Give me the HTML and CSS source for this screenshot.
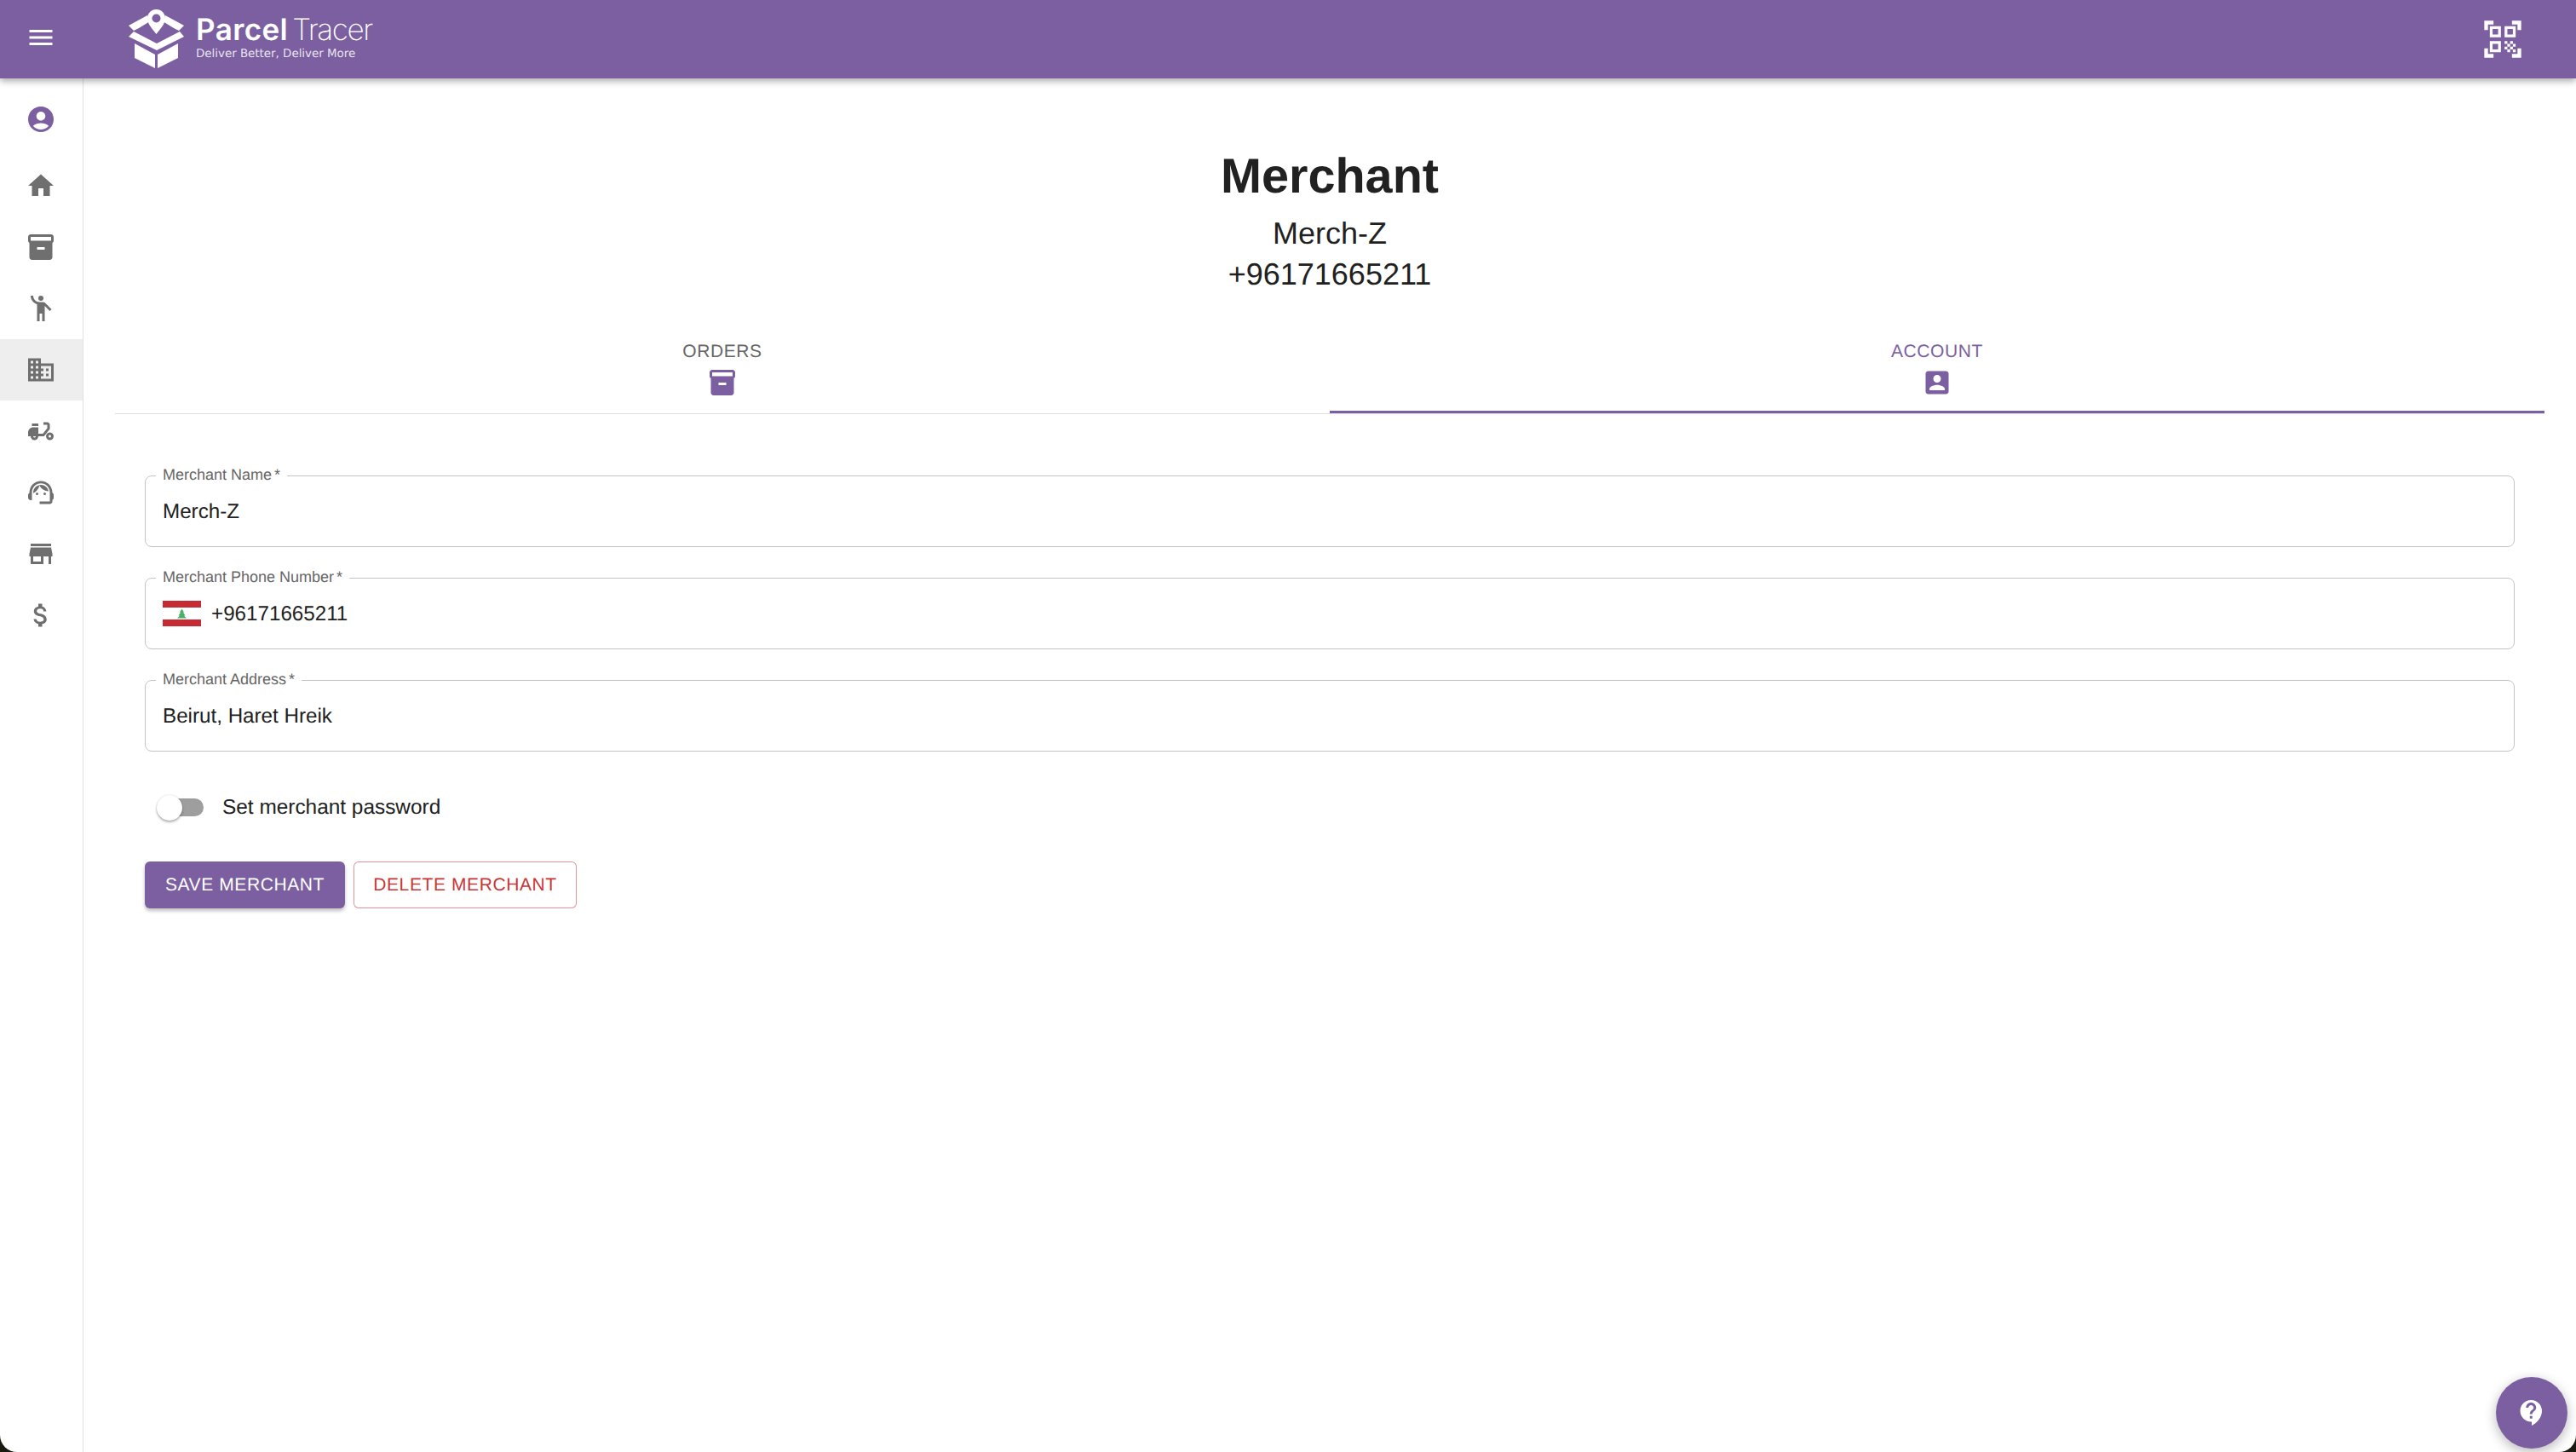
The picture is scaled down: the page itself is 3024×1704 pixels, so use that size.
FILE: index.html
```html
<!DOCTYPE html>
<html lang="en">
<head>
    <meta charset="UTF-8">
    <title>Parcel Tracer - Merchant</title>
    <link rel="stylesheet" href="styles.css">
</head>
<body>
<div class="page">
    <!-- Top bar -->
    <header class="topbar">
        <button class="icon-btn menu-btn">
            <svg class="icon" viewBox="0 0 24 24"><path d="M3 18h18v-2H3v2zm0-5h18v-2H3v2zm0-7v2h18V6H3z"/></svg>
        </button>
        <div class="logo">
            <svg class="logo-mark" viewBox="0 0 65 69">
                <path d="M32.5 0C26.7 0 22 4.7 22 10.5 22 17 28 23 32.5 29 37 23 43 17 43 10.5 43 4.7 38.300 0 32.500 0z"/>
                <circle class="logo-hole" cx="32.500" cy="10.500" r="5"/>
                <polygon points="0,19 22,7 25,14 12,22 6,25"/>
                <polygon points="65,19 43,7 40,14 53,22 59,25"/>
                <polygon points="0,32 6,26 33,40 60,26 65,32 33,48"/>
                <polygon points="7,40 31,53 31,69 7,57"/>
                <polygon points="58,40 34,53 34,69 58,57"/>
            </svg>
            <div class="logo-text">
                <div class="logo-name"><span class="logo-parcel">Parcel</span><span class="logo-tracer">Tracer</span></div>
                <div class="logo-tag">Deliver Better, Deliver More</div>
            </div>
        </div>
        <button class="icon-btn qr-btn">
            <svg class="qr-icon" viewBox="0 0 24 24"><path d="M9.500 6.500v3h-3v-3h3M11 5H5v6h6V5zm-1.500 9.500v3h-3v-3h3M11 13H5v6h6v-6zm6.500-6.500v3h-3v-3h3M19 5h-6v6h6V5zm-6 8h1.500v1.500H13V13zm1.500 1.500H16V16h-1.500v-1.500zM16 13h1.500v1.500H16V13zm-3 3h1.500v1.500H13V16zm1.500 1.500H16V19h-1.500v-1.500zM16 16h1.500v1.500H16V16zm1.500-1.500H19V16h-1.500v-1.500zm0 3H19V19h-1.500v-1.500zM22 7h-2V4h-3V2h5v5zm0 15v-5h-2v3h-3v2h5zM2 22h5v-2H4v-3H2v5zM2 2v5h2V4h3V2H2z"/></svg>
        </button>
    </header>

    <div class="content">
        <!-- Side navigation -->
        <nav class="sidebar">
            <a class="nav-item nav-account">
                <svg class="icon" viewBox="0 0 24 24"><path d="M12 2C6.480 2 2 6.480 2 12s4.480 10 10 10 10-4.480 10-10S17.520 2 12 2zm0 4c1.930 0 3.500 1.570 3.500 3.500S13.930 13 12 13s-3.500-1.570-3.500-3.500S10.070 6 12 6zm0 14c-2.030 0-4.430-.820-6.140-2.880C7.550 15.800 9.680 15 12 15s4.450.800 6.140 2.120C16.430 19.180 14.030 20 12 20z"/></svg>
            </a>
            <a class="nav-item">
                <svg class="icon" viewBox="0 0 24 24"><path d="M10 20v-6h4v6h5v-8h3L12 3 2 12h3v8z"/></svg>
            </a>
            <a class="nav-item">
                <svg class="icon" viewBox="0 0 24 24"><path d="M20 2H4c-1 0-2 .9-2 2v3.010c0 .720.430 1.340 1 1.690V20c0 1.100 1.100 2 2 2h14c.9 0 2-.9 2-2V8.700c.570-.350 1-.970 1-1.690V4c0-1.100-1-2-2-2zm-5 12H9v-2h6v2zm5-7H4V4l16-.020V7z"/></svg>
            </a>
            <a class="nav-item">
                <svg class="icon" viewBox="0 0 24 24"><circle cx="12" cy="4" r="2"/><path d="M15.890 8.110C15.500 7.720 14.830 7 13.530 7h-2.540C8.240 6.990 6 4.750 6 2H4c0 3.160 2.110 5.840 5 6.710V22h2v-6h2v6h2V10.050L18.950 14l1.410-1.410-4.470-4.480z"/></svg>
            </a>
            <a class="nav-item nav-selected">
                <svg class="icon" viewBox="0 0 24 24"><path d="M12 7V3H2v18h20V7H12zM6 19H4v-2h2v2zm0-4H4v-2h2v2zm0-4H4V9h2v2zm0-4H4V5h2v2zm4 12H8v-2h2v2zm0-4H8v-2h2v2zm0-4H8V9h2v2zm0-4H8V5h2v2zm10 12h-8v-2h2v-2h-2v-2h2v-2h-2V9h8v10zm-2-8h-2v2h2v-2zm0 4h-2v2h2v-2z"/></svg>
            </a>
            <a class="nav-item">
                <svg class="icon" viewBox="0 0 24 24"><path d="M19 7c0-1.100-.9-2-2-2h-3v2h3v2.650L13.520 14H10V9H6c-2.210 0-4 1.790-4 4v3h2c0 1.660 1.340 3 3 3s3-1.340 3-3h4.480L19 10.350V7zM7 17c-.550 0-1-.450-1-1h2c0 .550-.450 1-1 1z"/><path d="M5 6h5v2H5zM19 13c-1.660 0-3 1.340-3 3s1.340 3 3 3 3-1.340 3-3-1.340-3-3-3zm0 4c-.550 0-1-.450-1-1s.450-1 1-1 1 .450 1 1-.450 1-1 1z"/></svg>
            </a>
            <a class="nav-item">
                <svg class="icon" viewBox="0 0 24 24"><path d="M21 12.220C21 6.730 16.740 3 12 3c-4.690 0-9 3.650-9 9.280-.6.340-1 .980-1 1.720v2c0 1.100.9 2 2 2h1v-6.100c0-3.870 3.130-7 7-7s7 3.130 7 7V19h-8v2h8c1.100 0 2-.9 2-2v-1.220c.590-.310 1-.920 1-1.640v-2.300c0-.7-.410-1.310-1-1.620z"/><circle cx="9" cy="13" r="1"/><circle cx="15" cy="13" r="1"/><path d="M18 11.030C17.520 8.180 15.040 6 12.050 6c-3.030 0-6.290 2.510-6.030 6.450 2.470-1.010 4.330-3.210 4.860-5.890 1.310 2.630 4 4.440 7.120 4.470z"/></svg>
            </a>
            <a class="nav-item">
                <svg class="icon" viewBox="0 0 24 24"><path d="M20 4H4v2h16V4zm1 10v-2l-1-5H4l-1 5v2h1v6h10v-6h4v6h2v-6h1zm-9 4H6v-4h6v4z"/></svg>
            </a>
            <a class="nav-item">
                <svg class="icon" viewBox="0 0 24 24"><path d="M11.800 10.900c-2.270-.590-3-1.200-3-2.150 0-1.090 1.010-1.850 2.700-1.850 1.780 0 2.440.850 2.500 2.100h2.210c-.070-1.720-1.120-3.300-3.210-3.810V3h-3v2.160c-1.940.420-3.500 1.680-3.500 3.610 0 2.310 1.910 3.460 4.700 4.130 2.500.6 3 1.480 3 2.410 0 .690-.490 1.790-2.700 1.790-2.060 0-2.870-.920-2.980-2.100h-2.200c.120 2.190 1.760 3.420 3.680 3.830V21h3v-2.150c1.950-.370 3.500-1.500 3.500-3.550 0-2.840-2.430-3.810-4.700-4.400z"/></svg>
            </a>
        </nav>

        <main class="main">
            <h1 class="title">Merchant</h1>
            <div class="subtitle">Merch-Z</div>
            <div class="subtitle">+96171665211</div>

            <div class="tabs">
                <div class="tab">
                    <span class="tab-label">ORDERS</span>
                    <svg class="icon" viewBox="0 0 24 24"><path d="M20 2H4c-1 0-2 .9-2 2v3.010c0 .720.430 1.340 1 1.690V20c0 1.100 1.100 2 2 2h14c.9 0 2-.9 2-2V8.700c.570-.350 1-.970 1-1.690V4c0-1.100-1-2-2-2zm-5 12H9v-2h6v2zm5-7H4V4l16-.020V7z"/></svg>
                </div>
                <div class="tab tab-active">
                    <span class="tab-label">ACCOUNT</span>
                    <svg class="icon" viewBox="0 0 24 24"><path d="M3 5v14c0 1.100.890 2 2 2h14c1.100 0 2-.9 2-2V5c0-1.100-.9-2-2-2H5c-1.110 0-2 .9-2 2zm12 4c0 1.660-1.340 3-3 3s-3-1.340-3-3 1.340-3 3-3 3 1.340 3 3zm-9 8c0-2 4-3.100 6-3.100s6 1.100 6 3.100v1H6v-1z"/></svg>
                </div>
            </div>

            <form class="form">
                <div class="field">
                    <label class="field-label">Merchant Name<span class="req">*</span></label>
                    <span class="field-value">Merch-Z</span>
                </div>
                <div class="field">
                    <label class="field-label">Merchant Phone Number<span class="req">*</span></label>
                    <svg class="flag" viewBox="0 0 45 30">
                        <rect width="45" height="30" fill="#fff"/>
                        <rect width="45" height="8" fill="#c62a32"/>
                        <rect y="22" width="45" height="8" fill="#c62a32"/>
                        <polygon points="22.500,9.500 25,13.500 24,13.500 26.500,17.500 25,17.500 28,20.500 17,20.500 20,17.500 18.500,17.500 21,13.500 20,13.500" fill="#4caf6a"/>
                    </svg>
                    <span class="field-value">+96171665211</span>
                </div>
                <div class="field">
                    <label class="field-label">Merchant Address<span class="req">*</span></label>
                    <span class="field-value">Beirut, Haret Hreik</span>
                </div>

                <div class="switch-row">
                    <span class="switch"><span class="switch-thumb"></span></span>
                    <span class="switch-label">Set merchant password</span>
                </div>

                <div class="actions">
                    <button type="button" class="btn btn-save">SAVE MERCHANT</button>
                    <button type="button" class="btn btn-delete">DELETE MERCHANT</button>
                </div>
            </form>
        </main>
    </div>

    <button class="fab">
        <svg class="icon" viewBox="0 0 24 24"><path d="M11.500 2C6.810 2 3 5.810 3 10.500S6.810 19 11.500 19h.5v3c4.860-2.340 8-7 8-11.500C20 5.810 16.190 2 11.500 2zm1 14.500h-2v-2h2v2zm0-3.500h-2c0-3.250 3-3 3-5 0-1.100-.9-2-2-2s-2 .9-2 2h-2c0-2.210 1.790-4 4-4s4 1.790 4 4c0 2.500-3 2.750-3 5z"/></svg>
    </button>
</div>
</body>
</html>
```

FILE: styles.css
```css
html {
    background: #1c1a10;
}

body {
    margin: 0;
    font-family: "Liberation Sans", Arial, sans-serif;
    color: #212121;
    text-rendering: geometricPrecision;
}

.page {
    position: relative;
    width: 3024px;
    height: 1704px;
    background: #fff;
    overflow: hidden;
    border-radius: 0 0 20px 20px;
    display: flex;
    flex-direction: column;
}

.icon {
    width: 36px;
    height: 36px;
    display: block;
    fill: currentColor;
}

.icon-btn {
    background: none;
    border: none;
    padding: 0;
    color: #fff;
}

/* Top bar */
.topbar {
    position: relative;
    z-index: 2;
    flex: none;
    height: 92px;
    display: flex;
    align-items: center;
    background: #7c5fa1;
    box-shadow: 0 3px 8px rgba(0, 0, 0, 0.35);
}

.menu-btn {
    margin: -4px 0 0 30px;
}

.logo {
    display: flex;
    margin-left: 85px;
    margin-top: -2px;
    align-items: flex-start;
}

.logo-mark {
    width: 65px;
    height: 69px;
    fill: #fff;
}

.logo-hole {
    fill: #7c5fa1;
}

.logo-text {
    margin-left: 14px;
    color: #fff;
}

.logo-name {
    display: flex;
    font-family: Inter, sans-serif;
    font-size: 35px;
    line-height: 36px;
    margin-top: 6px;
}

.logo-parcel {
    font-weight: 600;
    letter-spacing: 0.4px;
}

.logo-tracer {
    font-weight: 200;
    margin-left: 5px;
    letter-spacing: -1.4px;
}

.logo-tag {
    font-family: "DejaVu Sans", sans-serif;
    font-size: 13.4px;
    line-height: 16px;
    margin-top: 3px;
    color: rgba(255, 255, 255, 0.85);
}

.qr-btn {
    margin-left: auto;
    margin-right: 60px;
}

.qr-icon {
    width: 52px;
    height: 52px;
    display: block;
    fill: #fff;
}

/* Sidebar */
.content {
    flex: 1;
    display: flex;
    min-height: 0;
}

.sidebar {
    flex: none;
    width: 97px;
    border-right: 1px solid #e0e0e0;
    padding-top: 18px;
}

.nav-item {
    height: 72px;
    padding-right: 1px;
    box-sizing: border-box;
    display: flex;
    align-items: center;
    justify-content: center;
    color: #6f6f6f;
}

.nav-account {
    height: 60px;
    margin-bottom: 12px;
    color: #7c5fa1;
}

.nav-selected {
    background: #eeeeee;
}

/* Main */
.main {
    flex: 1;
    padding: 77px 37px 0;
    min-width: 0;
}

.title {
    margin: 0 0 4px;
    font-size: 57.6px;
    line-height: 77px;
    font-weight: 700;
    text-align: center;
}

.subtitle {
    font-size: 36px;
    line-height: 48px;
    text-align: center;
}

.tabs {
    margin-top: 40px;
    display: flex;
    border-bottom: 1px solid #e0e0e0;
}

.tab {
    flex: 1;
    display: flex;
    flex-direction: column;
    align-items: center;
    padding: 15px 0;
    gap: 6px;
    border-bottom: 3px solid transparent;
    color: #7c5fa1;
}

.tab-label {
    font-size: 21px;
    line-height: 24px;
    letter-spacing: 0.6px;
    color: #666;
}

.tab-active {
    border-bottom-color: #7c5fa1;
}

.tab-active .tab-label {
    color: #7c5fa1;
}

/* Form */
.form {
    padding: 72px 35px 0;
    display: flex;
    flex-direction: column;
    gap: 36px;
}

.field {
    position: relative;
    height: 84px;
    box-sizing: border-box;
    border: 1px solid #c4c4c4;
    border-radius: 8px;
    padding: 0 20px;
    display: flex;
    align-items: center;
    gap: 12px;
}

.field-label {
    position: absolute;
    top: -12px;
    left: 12px;
    padding: 0 8px;
    background: #fff;
    font-size: 18px;
    line-height: 20px;
    color: #666;
}

.req {
    margin-left: 3px;
}

.field-value {
    font-size: 24.2px;
    padding-top: 2px;
}

.flag {
    width: 45px;
    height: 30px;
    display: block;
}

.switch-row {
    display: flex;
    align-items: center;
    height: 30px;
    margin: 14px 0 13px;
    padding-left: 14px;
    gap: 22px;
}

.switch {
    position: relative;
    width: 55px;
    height: 21px;
}

.switch::before {
    content: "";
    position: absolute;
    left: 4px;
    right: 0;
    top: 0;
    bottom: 0;
    border-radius: 11px;
    background: #9e9e9e;
}

.switch-thumb {
    position: absolute;
    left: 0;
    top: -4px;
    width: 30px;
    height: 30px;
    border-radius: 50%;
    background: #fff;
    box-shadow: 0 2px 3px rgba(0, 0, 0, 0.3), 0 0 2px rgba(0, 0, 0, 0.15);
}

.switch-label {
    font-size: 24.4px;
    padding-top: 2px;
}

.actions {
    display: flex;
    gap: 10px;
}

.btn {
    height: 55px;
    padding: 0;
    box-sizing: border-box;
    border-radius: 6px;
    font-family: inherit;
    font-size: 21px;
    letter-spacing: 0.6px;
    text-rendering: geometricPrecision;
}

.btn-save {
    width: 235px;
    border: none;
    background: #7c5fa1;
    color: #fff;
    box-shadow: 0 3px 4px rgba(0, 0, 0, 0.25);
}

.btn-delete {
    width: 262px;
    background: #fff;
    border: 1px solid rgba(198, 40, 40, 0.5);
    color: #c83737;
}

/* Help button */
.fab {
    position: absolute;
    right: 10px;
    bottom: 4px;
    width: 84px;
    height: 84px;
    border: none;
    border-radius: 50%;
    padding: 0;
    background: #7c5fa1;
    color: #fff;
    display: flex;
    align-items: center;
    justify-content: center;
    box-shadow: 0 4px 14px rgba(0, 0, 0, 0.28);
}
```
